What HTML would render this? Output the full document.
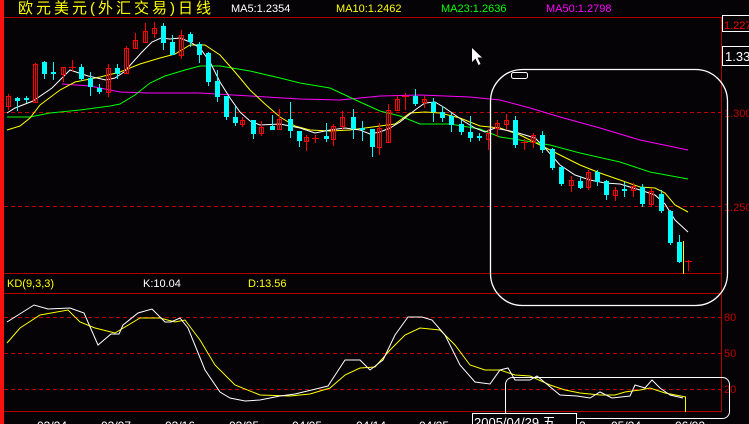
<!DOCTYPE html>
<html><head><meta charset="utf-8"><style>
html,body{margin:0;padding:0;background:#050306;overflow:hidden}
svg{display:block}
text{font-family:"Liberation Sans","Noto Sans CJK SC",sans-serif}
.c{fill:#00ffff}.cw{stroke:#00ffff;stroke-width:1}
.r{fill:none;stroke:#ff0000;stroke-width:1}
</style></head><body>
<svg width="749" height="424" viewBox="0 0 749 424" xmlns="http://www.w3.org/2000/svg">
<rect width="749" height="424" fill="#050306"/>
<rect x="0" y="0" width="4" height="424" fill="#ff1010"/>
<line x1="4" y1="17.5" x2="721" y2="17.5" stroke="#b00000"/>
<line x1="4" y1="273.5" x2="721" y2="273.5" stroke="#b00000"/>
<line x1="4" y1="293.5" x2="721" y2="293.5" stroke="#b00000"/>
<line x1="4" y1="411.5" x2="721" y2="411.5" stroke="#b00000"/>
<line x1="721.5" y1="17" x2="721.5" y2="412" stroke="#b00000"/>
<g stroke="#c00000" stroke-dasharray="4,3">
<line x1="4" y1="112.5" x2="721" y2="112.5"/>
<line x1="4" y1="206.5" x2="721" y2="206.5"/>
<line x1="4" y1="317.5" x2="721" y2="317.5"/>
<line x1="4" y1="353.5" x2="721" y2="353.5"/>
<line x1="4" y1="389.5" x2="721" y2="389.5"/>
</g>
<text x="18" y="13" font-size="15" letter-spacing="3" fill="#ffff00">欧元美元(外汇交易)日线</text>
<text x="231" y="12" font-size="11" fill="#ffffff">MA5:1.2354</text>
<text x="336" y="12" font-size="11" fill="#ffff00">MA10:1.2462</text>
<text x="441" y="12" font-size="11" fill="#00ff00">MA23:1.2636</text>
<text x="546" y="12" font-size="11" fill="#ff00ff">MA50:1.2798</text>
<path d="M722.5 31 V15.5 H749 M722 31.5 H749" stroke="#fff" fill="none"/>
<text x="724" y="29" font-size="11" fill="#ff0000">1.227</text>
<rect x="722.5" y="46.5" width="30" height="19" fill="none" stroke="#fff"/>
<text x="725" y="61" font-size="13" fill="#fff">1.33</text>
<text x="724" y="117" font-size="11" fill="#c00000">1.300</text>
<text x="724" y="211" font-size="11" fill="#c00000">1.250</text>
<text x="724" y="321" font-size="11" fill="#c00000">80</text>
<text x="724" y="357" font-size="11" fill="#c00000">50</text>
<text x="724" y="393" font-size="11" fill="#c00000">20</text>
<polyline fill="none" stroke="#ff00ff" points="62,84 90,86 120,92 150,93 200,93 250,96 300,99 340,100 380,96 420,95 470,97 500,100 530,108 560,117 600,128 640,140 688,150"/>
<polyline fill="none" stroke="#00ff00" points="7,117 30,117 50,113 80,110 110,106 120,104 135,95 150,83 165,76 185,70 200,66 220,66 250,71 280,78 300,83 330,88 345,95 360,102 380,111 400,116 420,124 450,124 480,129 500,137 520,140 550,145 580,153 620,162 650,172 688,179"/>
<polyline fill="none" stroke="#ffff00" points="7,130 20,126 30,118 40,105 60,90 75,82 100,77 120,72 140,64 160,58 175,54 190,45 205,45 220,55 235,72 250,90 265,104 280,117 295,126 310,130 330,131 350,130 365,128 380,126 395,124 410,113 425,112 440,113 460,118 480,126 500,128 520,135 540,145 560,155 580,165 600,173 620,180 640,187 655,188 665,193 675,205 688,212"/>
<polyline fill="none" stroke="#ffffff" points="7,113 15,108 33,101 52,88 70,70 88,76 106,80 115,78 124,72 142,52 152,42 161,38 170,39 180,38 190,42 200,48 210,62 220,82 230,98 240,112 250,121 260,125 280,124 300,128 315,133 330,130 345,128 360,130 370,134 380,132 390,128 400,122 415,110 425,103 435,102 445,108 455,115 465,122 475,128 485,132 495,128 505,130 515,132 525,135 535,138 545,148 560,165 575,175 590,180 605,183 620,184 640,190 655,195 665,204 675,220 688,232"/>
<g class="cw">
<line x1="17.5" y1="97" x2="17.5" y2="111"/><line x1="26.5" y1="96" x2="26.5" y2="103"/>
<line x1="44.5" y1="61" x2="44.5" y2="79"/><line x1="53.5" y1="62" x2="53.5" y2="80"/>
<line x1="81.5" y1="64" x2="81.5" y2="81"/><line x1="90.5" y1="72" x2="90.5" y2="96"/>
<line x1="99.5" y1="84" x2="99.5" y2="94"/><line x1="117.5" y1="64" x2="117.5" y2="79"/>
<line x1="163.5" y1="23" x2="163.5" y2="50"/><line x1="172.5" y1="35" x2="172.5" y2="55"/>
<line x1="190.5" y1="32" x2="190.5" y2="47"/><line x1="199.5" y1="42" x2="199.5" y2="63"/>
<line x1="208.5" y1="52" x2="208.5" y2="86"/><line x1="217.5" y1="70" x2="217.5" y2="102"/>
<line x1="226.5" y1="96" x2="226.5" y2="120"/><line x1="235.5" y1="106" x2="235.5" y2="126"/>
<line x1="253.5" y1="120" x2="253.5" y2="139"/><line x1="272.5" y1="115" x2="272.5" y2="130"/>
<line x1="290.5" y1="102" x2="290.5" y2="138"/><line x1="299.5" y1="131" x2="299.5" y2="147"/>
<line x1="326.5" y1="123" x2="326.5" y2="142"/><line x1="353.5" y1="109" x2="353.5" y2="139"/>
<line x1="362.5" y1="121" x2="362.5" y2="141"/><line x1="372.5" y1="129" x2="372.5" y2="157"/>
<line x1="415.5" y1="89" x2="415.5" y2="106"/><line x1="433.5" y1="98" x2="433.5" y2="122"/>
<line x1="442.5" y1="106" x2="442.5" y2="122"/><line x1="451.5" y1="113" x2="451.5" y2="132"/>
<line x1="461.5" y1="120" x2="461.5" y2="135"/><line x1="470.5" y1="116" x2="470.5" y2="142"/>
<line x1="479.5" y1="133" x2="479.5" y2="141"/><line x1="515.5" y1="116" x2="515.5" y2="148"/>
<line x1="542.5" y1="131" x2="542.5" y2="153"/><line x1="552.5" y1="148" x2="552.5" y2="170"/>
<line x1="561.5" y1="166" x2="561.5" y2="186"/><line x1="580.5" y1="176" x2="580.5" y2="189"/>
<line x1="597.5" y1="170" x2="597.5" y2="186"/><line x1="606.5" y1="180" x2="606.5" y2="200"/>
<line x1="624.5" y1="182" x2="624.5" y2="197"/><line x1="642.5" y1="184" x2="642.5" y2="207"/>
<line x1="661.5" y1="190" x2="661.5" y2="213"/><line x1="670.5" y1="210" x2="670.5" y2="245"/>
<line x1="679.5" y1="235" x2="679.5" y2="263"/>
</g>
<g class="c">
<rect x="15" y="98" width="5" height="3"/><rect x="24" y="98" width="5" height="2"/>
<rect x="42" y="62" width="5" height="12"/><rect x="51" y="72" width="5" height="2"/>
<rect x="79" y="67" width="5" height="12"/><rect x="88" y="78" width="5" height="9"/>
<rect x="97" y="88" width="5" height="4"/><rect x="115" y="68" width="5" height="6"/>
<rect x="161" y="26" width="5" height="17"/><rect x="170" y="42" width="5" height="13"/>
<rect x="188" y="34" width="5" height="8"/><rect x="197" y="44" width="5" height="11"/>
<rect x="206" y="53" width="5" height="29"/><rect x="215" y="81" width="5" height="16"/>
<rect x="224" y="96" width="5" height="21"/><rect x="233" y="117" width="5" height="6"/>
<rect x="251" y="120" width="5" height="14"/><rect x="270" y="126" width="5" height="4"/>
<rect x="288" y="119" width="5" height="12"/><rect x="297" y="131" width="5" height="10"/>
<rect x="324" y="136" width="5" height="3"/><rect x="351" y="117" width="5" height="12"/>
<rect x="360" y="128" width="5" height="2"/><rect x="370" y="129" width="5" height="18"/>
<rect x="413" y="96" width="5" height="8"/><rect x="431" y="102" width="5" height="10"/>
<rect x="440" y="112" width="5" height="6"/><rect x="449" y="116" width="5" height="9"/>
<rect x="459" y="124" width="5" height="8"/><rect x="468" y="132" width="5" height="6"/>
<rect x="477" y="136" width="5" height="2"/><rect x="513" y="120" width="5" height="25"/>
<rect x="540" y="135" width="5" height="15"/><rect x="550" y="149" width="5" height="19"/>
<rect x="559" y="167" width="5" height="17"/><rect x="578" y="181" width="5" height="7"/>
<rect x="595" y="172" width="5" height="10"/><rect x="604" y="181" width="5" height="14"/>
<rect x="622" y="189" width="5" height="2"/><rect x="640" y="187" width="5" height="17"/>
<rect x="659" y="194" width="5" height="17"/><rect x="668" y="211" width="5" height="32"/>
<rect x="677" y="242" width="5" height="20"/>
</g>
<g class="r">
<path d="M8.5 94V110"/><rect x="6.5" y="96.5" width="4" height="10"/>
<path d="M35.5 63V103"/><rect x="33.5" y="64.5" width="4" height="38"/>
<path d="M63.5 67V82"/><rect x="61.5" y="67.5" width="4" height="7"/>
<path d="M72.5 60V71M69 67.5H76"/>
<path d="M108.5 64V97"/><rect x="106.5" y="68.5" width="4" height="24"/>
<path d="M126.5 46V74"/><rect x="124.5" y="48.5" width="4" height="25"/>
<path d="M135.5 33V49"/><rect x="133.5" y="40.5" width="4" height="8"/>
<path d="M145.5 23V42"/><rect x="143.5" y="31.5" width="4" height="11"/>
<path d="M154.5 22V38"/><rect x="152.5" y="28.5" width="4" height="5"/>
<path d="M181.5 30V59"/><rect x="179.5" y="35.5" width="4" height="20"/>
<path d="M242.5 117V127"/><rect x="240.5" y="120.5" width="4" height="4"/>
<path d="M261.5 121V136"/><rect x="259.5" y="127.5" width="4" height="6"/>
<path d="M279.5 109V130"/><rect x="277.5" y="119.5" width="4" height="10"/>
<path d="M306.5 135V151"/><rect x="304.5" y="137.5" width="4" height="4"/>
<path d="M315.5 135V143M312 138.5H319"/>
<path d="M333.5 124V146"/><rect x="331.5" y="126.5" width="4" height="13"/>
<path d="M342.5 111V130"/><rect x="340.5" y="117.5" width="4" height="9"/>
<path d="M379.5 123V155"/><rect x="377.5" y="128.5" width="4" height="19"/>
<path d="M388.5 104V142"/><rect x="386.5" y="110.5" width="4" height="32"/>
<path d="M397.5 95V111"/><rect x="395.5" y="99.5" width="4" height="11"/>
<path d="M405.5 93V110M402 96.5H409"/>
<path d="M424.5 96V108"/><rect x="422.5" y="99.5" width="4" height="3"/>
<path d="M488.5 129V150"/><rect x="486.5" y="133.5" width="4" height="6"/>
<path d="M497.5 120V137"/><rect x="495.5" y="123.5" width="4" height="5"/>
<path d="M506.5 114V130"/><rect x="504.5" y="120.5" width="4" height="4"/>
<path d="M524.5 139V150M521 142.5H528"/>
<path d="M533.5 133V148"/><rect x="531.5" y="135.5" width="4" height="7"/>
<path d="M571.5 176V192"/><rect x="569.5" y="180.5" width="4" height="5"/>
<path d="M588.5 170V190"/><rect x="586.5" y="172.5" width="4" height="15"/>
<path d="M615.5 187V201"/><rect x="613.5" y="190.5" width="4" height="5"/>
<path d="M633.5 183V197"/><rect x="631.5" y="186.5" width="4" height="4"/>
<path d="M651.5 188V207"/><rect x="649.5" y="191.5" width="4" height="13"/>
<path d="M688.5 260V271M685 261.5H692"/>
</g>
<line x1="683.5" y1="241" x2="683.5" y2="274" stroke="#ffff00"/>
<rect x="490.5" y="69.5" width="237" height="236" rx="32" fill="none" stroke="#fff" stroke-width="1.3"/>
<rect x="511.5" y="72.5" width="16" height="6" rx="2" fill="none" stroke="#fff"/>
<path d="M472 48 L472 62 L475.5 58.5 L478.5 65 L480.5 64 L477.5 57.5 L482 57.5 Z" fill="#fff"/>
<text x="7" y="287" font-size="11" fill="#ffff00">KD(9,3,3)</text>
<text x="143" y="287" font-size="11" fill="#ffffff">K:10.04</text>
<text x="248" y="287" font-size="11" fill="#ffff00">D:13.56</text>
<polyline fill="none" stroke="#ffff00" points="7,343 20,328 40,315 68,310 80,322 95,328 115,333 140,318 160,318 175,322 185,320 200,340 215,365 235,385 260,395 290,396 310,394 330,388 345,375 360,368 375,367 390,350 405,335 420,328 440,330 455,345 470,365 485,370 500,370 515,375 530,376 550,385 565,390 580,393 600,395 615,395 625,392 640,390 650,388 665,393 686,397"/>
<polyline fill="none" stroke="#ffffff" points="7,322 34,305 48,309 70,308 84,313 98,345 111,334 119,334 123,325 138,313 152,309 165,322 171,322 180,318 188,328 205,370 220,392 230,398 245,401 260,400 280,396 295,394 320,388 328,386 345,360 360,360 370,370 383,360 395,335 408,317 422,317 432,320 445,335 460,365 475,382 490,384 500,370 508,368 515,380 530,380 537,376 560,395 577,396 590,398 600,392 612,398 630,396 635,385 645,388 652,380 660,388 670,395 683,398"/>
<line x1="685.5" y1="397" x2="685.5" y2="412" stroke="#ffff00"/>
<rect x="505.5" y="377.5" width="224" height="41" rx="7" fill="none" stroke="#fff"/>
<g font-size="12" fill="#fff">
<text x="37" y="430">03/24</text><text x="101" y="430">03/07</text><text x="165" y="430">03/16</text>
<text x="229" y="430">03/25</text><text x="292" y="430">04/05</text><text x="356" y="430">04/14</text>
<text x="419" y="430">04/25</text><text x="579" y="430">2</text>
<text x="611" y="430">05/24</text><text x="675" y="430">06/02</text>
</g>
<rect x="472.5" y="413.5" width="104" height="12" fill="#050306" stroke="#fff"/>
<text x="474" y="427" font-size="13" fill="#fff">2005/04/29 五</text>
</svg>
</body></html>
